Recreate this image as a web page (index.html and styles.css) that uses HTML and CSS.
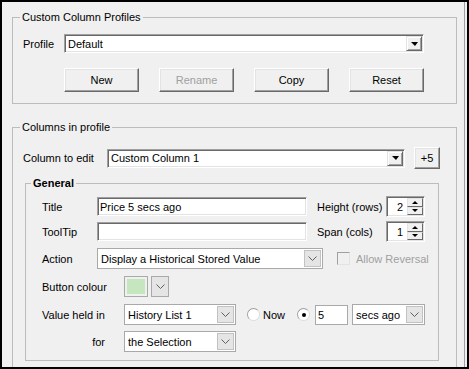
FILE: index.html
```html
<!DOCTYPE html>
<html lang="en">
<head>
  <meta charset="UTF-8">
  <title>Custom Columns</title>
  <link rel="stylesheet" href="styles.css">
</head>
<body>
  <div class="window">
    <div class="panel">

      <fieldset class="group profiles">
        <legend>Custom Column Profiles</legend>
        <div class="row profile-row">
          <span class="profile-label">Profile</span>
          <div class="combo sunken profile-combo">
            <span class="combo-text">Default</span>
            <span class="drop"><i class="tri-down"></i></span>
          </div>
        </div>
        <div class="btn-row">
          <button class="btn">New</button>
          <button class="btn" disabled>Rename</button>
          <button class="btn">Copy</button>
          <button class="btn">Reset</button>
        </div>
      </fieldset>

      <fieldset class="group columns">
        <legend>Columns in profile</legend>
        <div class="row column-row">
          <span class="column-label">Column to edit</span>
          <div class="combo sunken column-combo">
            <span class="combo-text">Custom Column 1</span>
            <span class="drop"><i class="tri-down"></i></span>
          </div>
          <button class="btn btn-plus">+5</button>
        </div>

        <fieldset class="group general">
          <legend>General</legend>

          <div class="field-row">
            <span class="field-label">Title</span>
            <input class="textbox sunken title-box" type="text" value="Price 5 secs ago">
            <span class="side-label">Height (rows)</span>
            <div class="spinner sunken">
              <span class="spin-val">2</span>
              <span class="spin-btns">
                <span class="spin-btn"><i class="tri-up"></i></span>
                <span class="spin-btn"><i class="tri-dn"></i></span>
              </span>
            </div>
          </div>

          <div class="field-row tight">
            <span class="field-label">ToolTip</span>
            <input class="textbox sunken title-box" type="text" value="">
            <span class="side-label">Span (cols)</span>
            <div class="spinner sunken">
              <span class="spin-val">1</span>
              <span class="spin-btns">
                <span class="spin-btn"><i class="tri-up"></i></span>
                <span class="spin-btn"><i class="tri-dn"></i></span>
              </span>
            </div>
          </div>

          <div class="field-row">
            <span class="field-label">Action</span>
            <div class="combo flat action-combo">
              <span class="combo-text">Display a Historical Stored Value</span>
              <span class="chev-btn"><svg width="9" height="5" viewBox="0 0 9 5"><path d="M0.5 0.5L4.5 4.5L8.5 0.5" fill="none" stroke="#606060"/></svg></span>
            </div>
            <span class="checkbox"></span>
            <span class="check-label">Allow Reversal</span>
          </div>

          <div class="field-row loose">
            <span class="field-label wide">Button colour</span>
            <div class="swatch"><span class="swatch-fill"></span></div>
            <span class="chev-btn swatch-btn"><svg width="9" height="5" viewBox="0 0 9 5"><path d="M0.5 0.5L4.5 4.5L8.5 0.5" fill="none" stroke="#606060"/></svg></span>
          </div>

          <div class="field-row loose">
            <span class="field-label wide">Value held in</span>
            <div class="combo flat list-combo">
              <span class="combo-text">History List 1</span>
              <span class="chev-btn"><svg width="9" height="5" viewBox="0 0 9 5"><path d="M0.5 0.5L4.5 4.5L8.5 0.5" fill="none" stroke="#606060"/></svg></span>
            </div>
            <span class="radio"></span>
            <span class="radio-label">Now</span>
            <span class="radio checked"></span>
            <input class="textbox flat-box secs-box" type="text" value="5">
            <div class="combo flat unit-combo">
              <span class="combo-text">secs ago</span>
              <span class="chev-btn"><svg width="9" height="5" viewBox="0 0 9 5"><path d="M0.5 0.5L4.5 4.5L8.5 0.5" fill="none" stroke="#606060"/></svg></span>
            </div>
          </div>

          <div class="field-row">
            <span class="field-label wide for-label">for</span>
            <div class="combo flat list-combo">
              <span class="combo-text">the Selection</span>
              <span class="chev-btn"><svg width="9" height="5" viewBox="0 0 9 5"><path d="M0.5 0.5L4.5 4.5L8.5 0.5" fill="none" stroke="#606060"/></svg></span>
            </div>
          </div>
        </fieldset>
      </fieldset>

    </div>
  </div>
</body>
</html>
```

FILE: styles.css
```css
body {
  margin: 0;
  font-family: "Liberation Sans", Arial, sans-serif;
  font-size: 11px;
  color: #000;
}
.window {
  width: 469px;
  height: 369px;
  box-sizing: border-box;
  border: 2px solid #000;
  background-color: #f0f0f0;
  overflow: hidden;
}
.panel {
  height: 100%;
  box-sizing: border-box;
  margin-right: 2px;
  border-right: 1px solid #a0a0a0;
  padding: 8px 0 0 10px;
}

/* group boxes */
.group {
  margin: 0;
  min-width: 0;
  box-sizing: border-box;
  border: 1px solid #bcbcbc;
}
.group legend {
  padding: 0 2px;
  line-height: 14px;
}
.profiles {
  width: 445px;
  padding: 10px 0 11px 10px;
}
.profiles legend {
  margin-left: -3px;
}
.columns {
  width: 445px;
  margin-top: 16px;
  padding: 13px 0 20px 10px;
}
.columns legend {
  margin-left: -3px;
}
.general {
  width: 414px;
  margin: 7px 0 0 2px;
  padding: 6px 0 8px 16px;
}
.general legend {
  margin-left: -11px;
  font-weight: bold;
}

.row {
  display: flex;
  align-items: center;
}

/* classic sunken edit / combo */
.sunken {
  box-sizing: border-box;
  background-color: #fff;
  border: 1px solid;
  border-color: #a0a0a0 #fff #fff #a0a0a0;
  box-shadow: inset 1px 1px 0 #696969, inset -1px -1px 0 #e3e3e3;
}
.combo {
  display: flex;
  align-items: stretch;
}
.combo.sunken {
  height: 19px;
  padding: 1px;
}
.combo-text {
  flex: 1;
  display: flex;
  align-items: center;
  padding-left: 2px;
  white-space: nowrap;
  overflow: hidden;
}
.drop {
  width: 16px;
  box-sizing: border-box;
  display: flex;
  align-items: center;
  justify-content: center;
  background-color: #f0f0f0;
  border: 1px solid;
  border-color: #e3e3e3 #696969 #696969 #e3e3e3;
  box-shadow: inset 1px 1px 0 #fff, inset -1px -1px 0 #a0a0a0;
}
.tri-down {
  width: 0;
  height: 0;
  border-left: 4px solid transparent;
  border-right: 3px solid transparent;
  border-top: 4px solid #000;
}
.tri-up,
.tri-dn {
  width: 0;
  height: 0;
  border-left: 3px solid transparent;
  border-right: 3px solid transparent;
}
.tri-up {
  border-bottom: 3px solid #000;
}
.tri-dn {
  border-top: 3px solid #000;
}

.profile-row {
  height: 19px;
}
.profile-label {
  width: 41px;
}
.profile-combo {
  width: 360px;
}
.btn-row {
  display: flex;
  gap: 20px;
  margin: 15px 0 0 41px;
}
.btn {
  width: 75px;
  height: 24px;
  padding: 0;
  font: inherit;
  color: #000;
  background-color: #f0f0f0;
  border: 1px solid;
  border-color: #fff #696969 #696969 #fff;
  box-shadow: inset -1px -1px 0 #a0a0a0, inset 1px 1px 0 #e3e3e3;
}
.btn:disabled {
  color: #a0a0a0;
}

.column-row {
  height: 22px;
}
.column-label {
  width: 84px;
}
.column-combo {
  width: 298px;
}
.btn-plus {
  width: 26px;
  height: 22px;
  margin-left: 9px;
}

/* General rows */
.field-row {
  display: flex;
  align-items: center;
  height: 21px;
  margin-top: 6px;
}
.field-row:first-of-type {
  margin-top: 0;
}
.field-row.tight {
  margin-top: 4px;
}
.field-row.loose {
  margin-top: 7px;
}
.field-label {
  width: 55px;
  flex: none;
}
.field-label.wide {
  width: 82px;
}
.for-label {
  text-align: right;
  padding-right: 19px;
  box-sizing: border-box;
}
.textbox {
  font: inherit;
  color: #000;
  height: 19px;
  padding: 0 0 0 2px;
  margin: 0;
  outline: none;
}
.title-box {
  width: 210px;
}
.side-label {
  width: 69px;
  margin-left: 10px;
}
.spinner {
  width: 39px;
  height: 21px;
  display: flex;
  padding: 1px;
}
.spin-val {
  flex: 1;
  display: flex;
  align-items: center;
  justify-content: flex-end;
  padding-right: 4px;
}
.spin-btns {
  width: 16px;
  display: flex;
  flex-direction: column;
}
.spin-btn {
  flex: 1;
  display: flex;
  align-items: center;
  justify-content: center;
  background-color: #f0f0f0;
  border: 1px solid;
  border-color: #e3e3e3 #696969 #696969 #e3e3e3;
}

/* flat (newer style) combos */
.combo.flat {
  box-sizing: border-box;
  height: 21px;
  background-color: #fff;
  border: 1px solid #a9a9a9;
  padding: 1px;
}
.combo.flat .combo-text {
  padding-left: 2px;
}
.chev-btn {
  width: 17px;
  box-sizing: border-box;
  display: flex;
  align-items: center;
  justify-content: center;
  background-color: #e5e5e5;
  border: 1px solid #c2c2c2;
}
.action-combo {
  width: 226px;
}
.list-combo {
  width: 112px;
}
.unit-combo {
  width: 73px;
  margin-left: 4px;
}
.checkbox {
  width: 13px;
  height: 13px;
  box-sizing: border-box;
  margin-left: 14px;
  border: 1px solid;
  border-color: #a0a0a0 #e3e3e3 #e3e3e3 #a0a0a0;
  background-color: #f0f0f0;
}
.check-label {
  margin-left: 6px;
  color: #a0a0a0;
}
.swatch {
  width: 24px;
  height: 21px;
  box-sizing: border-box;
  border: 1px solid #a9a9a9;
  padding: 2px;
  display: flex;
}
.swatch-fill {
  flex: 1;
  background-color: #c6e6c0;
}
.swatch-btn {
  width: 18px;
  height: 21px;
  margin-left: 3px;
  border-color: #a9a9a9;
}
.radio {
  width: 13px;
  height: 13px;
  box-sizing: border-box;
  border-radius: 50%;
  border: 1px solid;
  border-color: #a0a0a0 #dcdcdc #dcdcdc #a0a0a0;
  background-color: #fff;
  margin-left: 11px;
  display: flex;
  align-items: center;
  justify-content: center;
}
.radio.checked {
  margin-left: 12px;
}
.radio.checked::after {
  content: "";
  width: 4px;
  height: 4px;
  border-radius: 50%;
  background-color: #000;
}
.radio-label {
  margin-left: 3px;
}
.flat-box {
  width: 33px;
  height: 20px;
  margin-left: 5px;
  box-sizing: border-box;
  border: 1px solid #a9a9a9;
  background-color: #fff;
}
```
